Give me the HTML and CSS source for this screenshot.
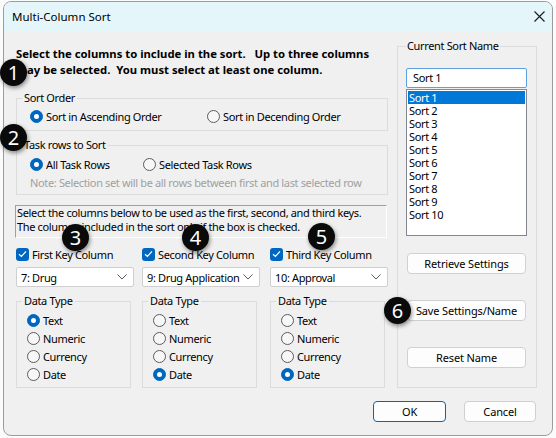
FILE: index.html
```html
<!DOCTYPE html>
<html lang="en">
<head>
    <meta charset="UTF-8">
    <title>Multi-Column Sort</title>
    <link rel="stylesheet" href="styles.css">
</head>
<body>
    <div class="window">
        <!-- Title bar -->
        <div class="titlebar">
            <span class="title">Multi-Column Sort</span>
            <svg class="close" width="11" height="11" viewBox="0 0 11 11">
                <path d="M0.5 0.5 L10.5 10.5 M10.5 0.5 L0.5 10.5" stroke="#1a1a1a" stroke-width="1.1" fill="none"/>
            </svg>
        </div>

        <div class="content">
            <div class="left">
                <p class="intro">Select the columns to include in the sort.&nbsp;&nbsp; Up to three columns<br>may be selected.&nbsp; You must select at least one column.</p>

                <fieldset class="group sort-order">
                    <legend>Sort Order</legend>
                    <div class="radio-row">
                        <label class="opt asc"><span class="radio on"></span>Sort in Ascending Order</label>
                        <label class="opt"><span class="radio"></span>Sort in Decending Order</label>
                    </div>
                </fieldset>

                <fieldset class="group task-rows">
                    <legend>Task rows to Sort</legend>
                    <div class="radio-row">
                        <label class="opt all"><span class="radio on"></span>All Task Rows</label>
                        <label class="opt"><span class="radio"></span>Selected Task Rows</label>
                    </div>
                    <p class="note">Note: Selection set will be all rows between first and last selected row</p>
                </fieldset>

                <div class="info">Select the columns below to be used as the first, second, and third keys.<br>The columns included in the sort only if the box is checked.</div>

                <div class="keys">
                    <div class="key">
                        <label class="check-label"><span class="check"><svg width="9" height="8" viewBox="0 0 9 8"><path d="M1 4.2 L3.4 6.5 L8 1.3" stroke="#fff" stroke-width="1.2" fill="none"/></svg></span>First Key Column</label>
                        <div class="combo"><span>7: Drug</span><svg width="10" height="6" viewBox="0 0 10 6"><path d="M0.5 0.5 L5 5 L9.5 0.5" stroke="#5a5a5a" stroke-width="1" fill="none"/></svg></div>
                        <fieldset class="group dtype">
                            <legend>Data Type</legend>
                            <label class="opt"><span class="radio on"></span>Text</label>
                            <label class="opt"><span class="radio"></span>Numeric</label>
                            <label class="opt"><span class="radio"></span>Currency</label>
                            <label class="opt"><span class="radio"></span>Date</label>
                        </fieldset>
                    </div>
                    <div class="key">
                        <label class="check-label"><span class="check"><svg width="9" height="8" viewBox="0 0 9 8"><path d="M1 4.2 L3.4 6.5 L8 1.3" stroke="#fff" stroke-width="1.2" fill="none"/></svg></span>Second Key Column</label>
                        <div class="combo"><span>9: Drug Application</span><svg width="10" height="6" viewBox="0 0 10 6"><path d="M0.5 0.5 L5 5 L9.5 0.5" stroke="#5a5a5a" stroke-width="1" fill="none"/></svg></div>
                        <fieldset class="group dtype">
                            <legend>Data Type</legend>
                            <label class="opt"><span class="radio"></span>Text</label>
                            <label class="opt"><span class="radio"></span>Numeric</label>
                            <label class="opt"><span class="radio"></span>Currency</label>
                            <label class="opt"><span class="radio on"></span>Date</label>
                        </fieldset>
                    </div>
                    <div class="key">
                        <label class="check-label"><span class="check"><svg width="9" height="8" viewBox="0 0 9 8"><path d="M1 4.2 L3.4 6.5 L8 1.3" stroke="#fff" stroke-width="1.2" fill="none"/></svg></span>Third Key Column</label>
                        <div class="combo"><span>10: Approval</span><svg width="10" height="6" viewBox="0 0 10 6"><path d="M0.5 0.5 L5 5 L9.5 0.5" stroke="#5a5a5a" stroke-width="1" fill="none"/></svg></div>
                        <fieldset class="group dtype">
                            <legend>Data Type</legend>
                            <label class="opt"><span class="radio"></span>Text</label>
                            <label class="opt"><span class="radio"></span>Numeric</label>
                            <label class="opt"><span class="radio"></span>Currency</label>
                            <label class="opt"><span class="radio on"></span>Date</label>
                        </fieldset>
                    </div>
                </div>
            </div>

            <fieldset class="group sort-name">
                <legend>Current Sort Name</legend>
                <div class="name-input">Sort 1</div>
                <ul class="name-list">
                    <li class="selected">Sort 1</li>
                    <li>Sort 2</li>
                    <li>Sort 3</li>
                    <li>Sort 4</li>
                    <li>Sort 5</li>
                    <li>Sort 6</li>
                    <li>Sort 7</li>
                    <li>Sort 8</li>
                    <li>Sort 9</li>
                    <li>Sort 10</li>
                </ul>
                <button class="btn side retrieve">Retrieve Settings</button>
                <button class="btn side save">Save Settings/Name</button>
                <button class="btn side reset">Reset Name</button>
            </fieldset>
        </div>

        <div class="actions">
            <button class="btn default">OK</button>
            <button class="btn">Cancel</button>
        </div>

        <!-- Step badges -->
        <span class="badge b1">1</span>
        <span class="badge b2">2</span>
        <span class="badge b3">3</span>
        <span class="badge b4">4</span>
        <span class="badge b5">5</span>
        <span class="badge b6">6</span>
    </div>
</body>
</html>
```

FILE: styles.css
```css
* {
    margin: 0;
    padding: 0;
    box-sizing: border-box;
}

body {
    font-family: 'Noto Sans', 'Open Sans', sans-serif;
    font-size: 11px;
    letter-spacing: -0.35px;
    color: #000;
    background: #fbfbfb;
    padding: 1px 0 0 3px;
}

.window {
    position: relative;
    width: 550px;
    height: 435px;
    background: #f0f0f0;
    border: 1px solid #9c9c9c;
    border-radius: 8px;
}

.titlebar {
    height: 29px;
    background: #e4f6f9;
    border-radius: 7px 7px 0 0;
    display: flex;
    align-items: center;
    justify-content: space-between;
    padding: 0 7px 1px 8px;
    font-size: 11.5px;
    letter-spacing: 0;
}

.close {
    display: block;
}

.content {
    display: flex;
    gap: 9px;
    padding: 8px 0 0 12px;
}

.left {
    width: 372px;
}

.intro {
    margin-top: 7px;
    font-weight: 700;
    font-size: 11.3px;
    letter-spacing: 0;
    line-height: 16px;
    white-space: nowrap;
}

/* group boxes */
.group {
    border: 1px solid #dcdcdc;
    padding: 0 0 0 5px;
    min-inline-size: 0;
}

.group legend {
    padding: 0 2px;
    line-height: 14px;
}

.sort-order {
    margin-top: 13px;
    padding-bottom: 6px;
}

.sort-order .radio-row {
    padding-top: 3px;
}

.task-rows {
    margin-top: 7px;
    padding-bottom: 4px;
}

.task-rows .radio-row {
    padding-top: 4px;
}

.radio-row {
    display: flex;
    padding-left: 8px;
}

.opt {
    display: flex;
    align-items: center;
    height: 16px;
    gap: 3px;
    white-space: nowrap;
}

.opt.asc {
    width: 177px;
}

.opt.all {
    width: 113px;
}

.radio {
    width: 13px;
    height: 13px;
    border-radius: 50%;
    border: 1px solid #5b5b5b;
    background: #f7f7f7;
    position: relative;
    flex: none;
}

.radio.on {
    background: #0067c0;
    border-color: #0067c0;
}

.radio.on::after {
    content: '';
    position: absolute;
    left: 3px;
    top: 3px;
    width: 5px;
    height: 5px;
    border-radius: 50%;
    background: #fff;
}

.note {
    margin-top: 4px;
    padding-left: 8px;
    line-height: 14px;
    color: #a0a0a0;
    white-space: nowrap;
}

.info {
    margin: 10px 0 0 -1px;
    width: 372px;
    border: 1px solid;
    border-color: #a0a0a0 #fff #fff #a0a0a0;
    padding: 0 0 3px 1px;
    line-height: 14px;
    white-space: nowrap;
}

/* key columns */
.keys {
    display: grid;
    grid-template-columns: 126px 128px 118px;
    margin-top: 8px;
}

.check-label {
    display: flex;
    align-items: center;
    gap: 3px;
    height: 16px;
    white-space: nowrap;
}

.check {
    width: 13px;
    height: 13px;
    border-radius: 3px;
    background: #0067c0;
    display: flex;
    align-items: center;
    justify-content: center;
    flex: none;
}

.check svg {
    display: block;
}

.combo {
    margin-top: 5px;
    width: 118px;
    height: 20px;
    background: #fff;
    border: 1px solid #cfcfcf;
    border-radius: 2px;
    display: flex;
    align-items: center;
    justify-content: space-between;
    padding: 0 6px 0 4px;
    white-space: nowrap;
}

.combo svg {
    display: block;
    flex: none;
}

.dtype {
    margin-top: 7px;
    width: 115px;
    padding-top: 3px;
    padding-bottom: 4px;
}

.dtype .opt {
    height: 18px;
    padding-left: 5px;
}

/* sort name panel */
.sort-name {
    width: 140px;
    height: 349px;
    padding: 0 9px 0 8px;
}

.sort-name legend {
    padding: 0 1px;
}

.name-input {
    margin-top: 15px;
    height: 20px;
    background: #fff;
    border: 1px solid #5e9fe0;
    border-radius: 2px;
    padding: 0 6px;
    line-height: 18px;
}

.name-list {
    list-style: none;
    margin-top: 1px;
    height: 147px;
    background: #fff;
    border: 1px solid #828790;
    padding: 1px;
}

.name-list li {
    height: 13px;
    line-height: 13px;
    padding-left: 1px;
}

.name-list li.selected {
    background: #0078d7;
    color: #fff;
}

.btn {
    font-family: inherit;
    font-size: 11px;
    letter-spacing: -0.15px;
    color: #000;
    background: #fdfdfd;
    border: 1px solid #d0d0d0;
    border-radius: 4px;
    height: 21px;
}

.btn.side {
    display: block;
    width: 119px;
    margin-left: 1px;
}

.retrieve {
    margin-top: 17px;
}

.save {
    margin-top: 26px;
}

.reset {
    margin-top: 26px;
}

.actions {
    display: flex;
    justify-content: flex-end;
    gap: 18px;
    margin-top: 13px;
    padding-right: 16px;
}

.actions .btn {
    width: 72px;
}

.btn.default {
    width: 73px;
    border-color: #0067c0;
}

/* step badges */
.badge {
    position: absolute;
    width: 27px;
    height: 27px;
    border-radius: 50%;
    background: #0a0a0a;
    color: #fff;
    font-size: 20px;
    letter-spacing: 0;
    line-height: 27px;
    text-align: center;
    box-shadow: 1px 2px 4px rgba(0, 0, 0, 0.45);
}

.b1 { left: -4px; top: 57px; }
.b2 { left: -4px; top: 122px; }
.b3 { left: 58px; top: 222px; }
.b4 { left: 178px; top: 222px; }
.b5 { left: 304px; top: 221px; }
.b6 { left: 380px; top: 295px; }
```
